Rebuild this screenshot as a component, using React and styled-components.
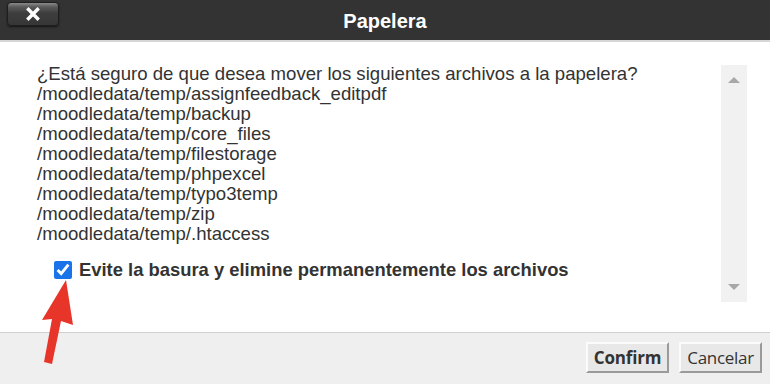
import React from 'react'
import styled, { createGlobalStyle } from 'styled-components'

const Global = createGlobalStyle`
  html, body { margin: 0; padding: 0; background: #fff; }
  body { width: 770px; height: 384px; overflow: hidden; font-family: 'Liberation Sans', Arial, sans-serif; }
`

const Dialog = styled.div`
  position: relative;
  width: 770px;
  height: 384px;
  display: flex;
  flex-direction: column;
  background: #fff;
`

const Header = styled.div`
  height: 40px;
  background: #333333;
  border-bottom: 2px solid #d6d6d6;
  display: grid;
  grid-template-columns: 120px 1fr 120px;
  align-items: center;
`

const CloseButton = styled.button`
  margin: 0 0 13px 7px;
  width: 52px;
  height: 24px;
  border: 1px solid #1e1e1e;
  border-radius: 4px;
  background: linear-gradient(#8a8a8a 0%, #5a5a5a 18%, #3e3e3e 45%, #363636 100%);
  box-shadow: 0 1px 2px rgba(0,0,0,.6);
  display: flex;
  align-items: center;
  justify-content: center;
  padding: 0;
`

const Title = styled.h1`
  margin: 2px 0 0;
  text-align: center;
  color: #fff;
  font-size: 20px;
  font-weight: bold;
  font-family: 'Liberation Sans', Arial, sans-serif;
`

const Body = styled.div`
  flex: 1;
  display: flex;
  border-bottom: 1px solid #cfcfcf;
`

const Content = styled.div`
  flex: 1;
  padding: 22px 0 0 37px;
  color: #333;
  font-size: 18.6px;
  line-height: 20px;
`

const Line = styled.div`
  white-space: nowrap;
`

const CheckRow = styled.label`
  display: flex;
  align-items: center;
  gap: 7px;
  margin: 16px 0 0 17px;
  font-weight: bold;
  font-size: 18.4px;
  color: #333;
  white-space: nowrap;
`

const Check = styled.input`
  flex-shrink: 0;
  width: 18px;
  height: 18px;
  margin: 0;
  accent-color: #1a73e8;
`

const Scrollbar = styled.div`
  width: 26px;
  margin: 23px 23px 30px 0;
  background: #f1f1f1;
  display: flex;
  flex-direction: column;
  justify-content: space-between;
  align-items: center;
  padding: 12px 0;
`

const Arrow = styled.span`
  width: 0;
  height: 0;
  border-left: 6px solid transparent;
  border-right: 6px solid transparent;
  ${p => p.$up ? 'border-bottom: 6px solid #a8a8a8;' : 'border-top: 6px solid #a8a8a8;'}
`

const Footer = styled.div`
  height: 51px;
  background: #efefef;
  display: flex;
  justify-content: flex-end;
  align-items: center;
  gap: 10px;
  padding-right: 8px;
`

const Button = styled.button`
  width: 83px;
  height: 31px;
  padding: 0;
  background: #e8e8e8;
  border: 2px solid;
  border-color: #fbfbfb #9a9a9a #9a9a9a #fbfbfb;
  font-family: 'Open Sans', 'DejaVu Sans', sans-serif;
  font-size: 17px;
  font-weight: ${p => p.$primary ? 'bold' : 'normal'};
  letter-spacing: ${p => p.$primary ? '-0.2px' : '-0.3px'};
  color: #333;
  margin-bottom: 2px;
`

const Pointer = styled.svg`
  position: absolute;
  left: 30px;
  top: 275px;
`

const files = [
  '/moodledata/temp/assignfeedback_editpdf',
  '/moodledata/temp/backup',
  '/moodledata/temp/core_files',
  '/moodledata/temp/filestorage',
  '/moodledata/temp/phpexcel',
  '/moodledata/temp/typo3temp',
  '/moodledata/temp/zip',
  '/moodledata/temp/.htaccess',
]

export default function App() {
  return (
    <Dialog>
      <Global />
      <Header>
        <CloseButton>
          <svg width="16" height="16" viewBox="0 0 16 16">
            <path d="M3.5 3.5 L12.5 12.5 M12.5 3.5 L3.5 12.5" stroke="#fff" strokeWidth="3.4" strokeLinecap="square" />
          </svg>
        </CloseButton>
        <Title>Papelera</Title>
        <div />
      </Header>
      <Body>
        <Content>
          <Line>¿Está seguro de que desea mover los siguientes archivos a la papelera?</Line>
          {files.map(f => <Line key={f}>{f}</Line>)}
          <CheckRow>
            <Check type="checkbox" defaultChecked />
            Evite la basura y elimine permanentemente los archivos
          </CheckRow>
        </Content>
        <Scrollbar>
          <Arrow $up />
          <Arrow />
        </Scrollbar>
      </Body>
      <Footer>
        <Button $primary>Confirm</Button>
        <Button>Cancelar</Button>
      </Footer>
      <Pointer width="50" height="95" viewBox="0 0 50 95">
        <path d="M36 5 L43 50 L31 46 L22 89 L14 87 L22 44 L12 45 Z" fill="#e8352a" />
      </Pointer>
    </Dialog>
  )
}
